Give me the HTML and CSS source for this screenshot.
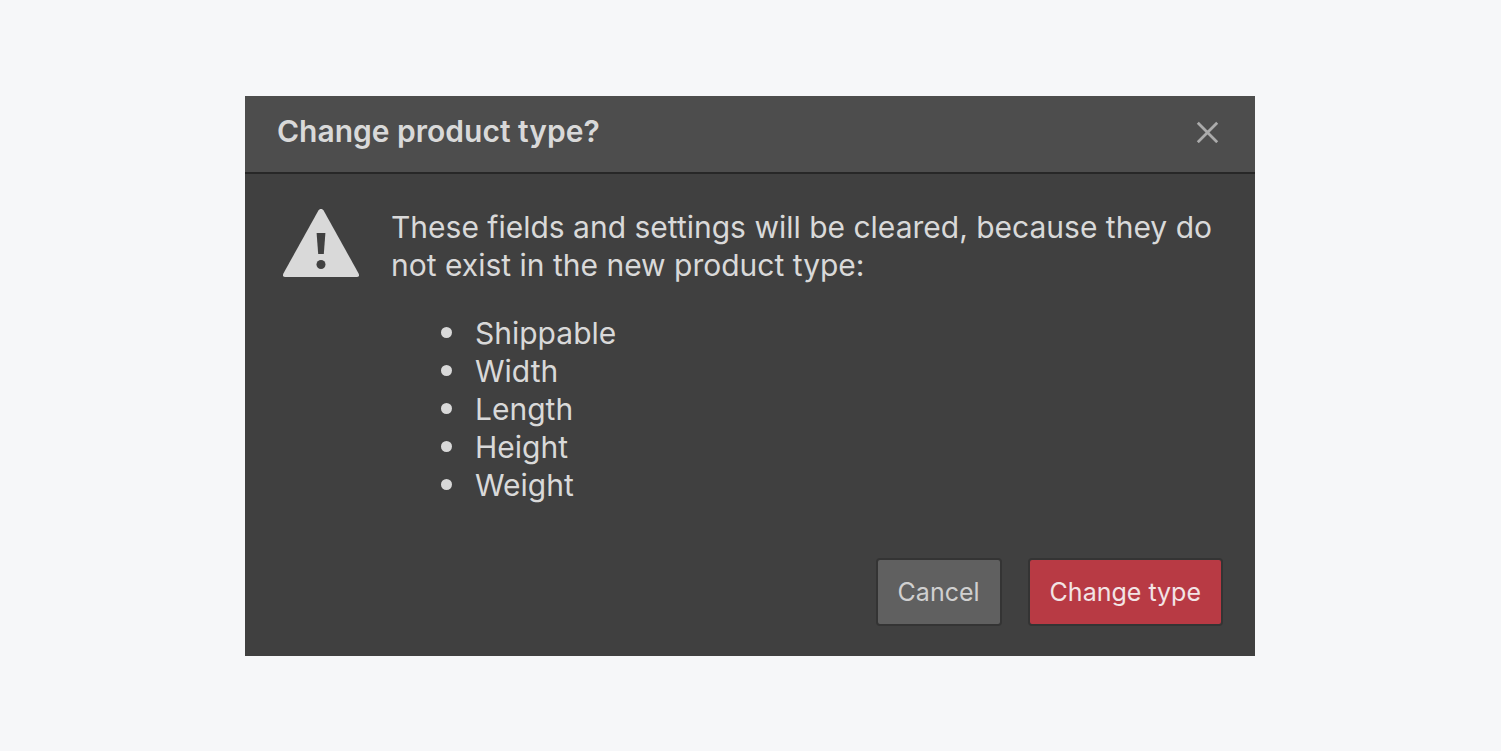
FILE: index.html
```html
<!DOCTYPE html>
<html lang="en">
<head>
<meta charset="utf-8">
<meta name="viewport" content="width=device-width, initial-scale=1">
<title>Change product type?</title>
<link rel="stylesheet" href="styles.css">
</head>
<body>
<section class="dialog" role="dialog" aria-labelledby="dialog-title">
  <header class="dialog-header">
    <h1 class="dialog-title" id="dialog-title">Change product type?</h1>
    <button class="close" type="button" aria-label="Close">
      <svg width="24" height="24" viewBox="0 0 24 24" fill="none" stroke="currentColor" stroke-width="2.8"><path d="M2.8 3.8 22.2 23.2M22.2 3.8 2.8 23.2"/></svg>
    </button>
  </header>
  <div class="dialog-body">
    <svg class="warning" width="76" height="70" viewBox="0 0 76 70" aria-hidden="true">
      <path fill="#d9d9d9" d="M35.4 1.4Q38-1.6 40.6 1.4L75.6 64.5Q77 68 73.6 68H2.4Q-1 68 .4 64.5Z"/>
      <path fill="#404040" d="M33.6 24H42.4L40.8 45H35.2Z"/>
      <circle cx="38" cy="55.5" r="4.5" fill="#404040"/>
    </svg>
    <div class="message">
      <p class="text">These fields and settings will be cleared, because they do not exist in the new product type:</p>
      <ul class="fields">
        <li>Shippable</li>
        <li>Width</li>
        <li>Length</li>
        <li>Height</li>
        <li>Weight</li>
      </ul>
    </div>
  </div>
  <footer class="dialog-footer">
    <button class="button" type="button">Cancel</button>
    <button class="button button-danger" type="button">Change type</button>
  </footer>
</section>
</body>
</html>
```
FILE: styles.css
```css
* { box-sizing: border-box; }
body {
  margin: 0;
  min-height: 100vh;
  display: grid;
  place-items: center;
  padding: 32px 33px 32px 32px;
  background: #f6f7f9;
  color: #d9d9d9;
  font-family: Inter, "Liberation Sans", sans-serif;
}
.dialog {
  width: 100%;
  max-width: 1010px;
  background: #404040;
}
.dialog-header {
  display: flex;
  align-items: center;
  justify-content: space-between;
  padding: 16px 36px 22px 32px;
  background: #4d4d4d;
  border-bottom: 2px solid #272727;
}
.dialog-title {
  margin: 0;
  font-size: 30px;
  line-height: 38px;
  font-weight: 600;
}
.close {
  display: flex;
  padding: 0;
  border: 0;
  background: none;
  color: #ababab;
}
.dialog-body {
  display: flex;
  align-items: flex-start;
  gap: 32px;
  padding: 34px 38px 0;
}
.warning {
  flex: none;
  margin-top: 1px;
}
.message {
  font-size: 30px;
  line-height: 38px;
}
.text { margin: 0; }
.fields {
  margin: 30px 0 0;
  padding-left: 50px;
  list-style: none;
}
.fields li {
  display: flex;
  align-items: center;
  gap: 23px;
}
.fields li::before {
  content: "";
  width: 11px;
  height: 11px;
  border-radius: 50%;
  background: currentColor;
}
.dialog-footer {
  display: flex;
  justify-content: flex-end;
  gap: 26px;
  padding: 54px 32px 30px;
}
.button {
  height: 68px;
  padding: 0 20px;
  border: 2px solid #343434;
  border-radius: 4px;
  background: #606060;
  color: #d0d0d0;
  font-family: inherit;
  font-size: 25px;
  line-height: 32px;
}
.button-danger {
  background: #b83a44;
  color: #f2e4e5;
}
```
